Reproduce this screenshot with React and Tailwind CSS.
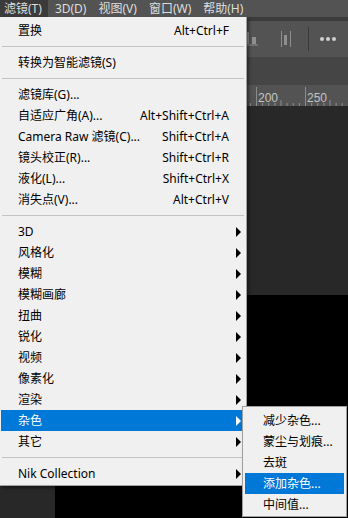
import React from 'react'

const FONT = "font-['Noto_Sans','Noto_Sans_CJK_SC',sans-serif]"

const MENU = [
  { label: '置换', sc: 'Alt+Ctrl+F' },
  'sep',
  { label: '转换为智能滤镜(S)' },
  'sep',
  { label: '滤镜库(G)...' },
  { label: '自适应广角(A)...', sc: 'Alt+Shift+Ctrl+A' },
  { label: 'Camera Raw 滤镜(C)...', sc: 'Shift+Ctrl+A' },
  { label: '镜头校正(R)...', sc: 'Shift+Ctrl+R' },
  { label: '液化(L)...', sc: 'Shift+Ctrl+X' },
  { label: '消失点(V)...', sc: 'Alt+Ctrl+V' },
  'sep',
  { label: '3D', sub: true },
  { label: '风格化', sub: true },
  { label: '模糊', sub: true },
  { label: '模糊画廊', sub: true },
  { label: '扭曲', sub: true },
  { label: '锐化', sub: true },
  { label: '视频', sub: true },
  { label: '像素化', sub: true },
  { label: '渲染', sub: true },
  { label: '杂色', sub: true, active: true },
  { label: '其它', sub: true },
  'sep',
  { label: 'Nik Collection', sub: true },
]

const SUBMENU = ['减少杂色...', '蒙尘与划痕...', '去斑', '添加杂色...', '中间值...']

const TOP = ['滤镜(T)', '3D(D)', '视图(V)', '窗口(W)', '帮助(H)']

function Arrow({ white }) {
  return (
    <div className={`w-0 h-0 border-y-[5px] border-y-transparent border-l-[5px] ${white ? 'border-l-white' : 'border-l-black'}`} />
  )
}

function MenuRow({ item }) {
  const on = item.active
  return (
    <div className={`mx-[1px] h-[21px] flex items-center pl-[17px] text-[12px] leading-[21px] ${on ? 'bg-[#0078d7] text-white' : 'text-black'}`}>
      <span className="flex-1 whitespace-nowrap">{item.label}</span>
      {item.sc && <span className="whitespace-nowrap">{item.sc}</span>}
      <div className="w-[16px] pl-[7px] flex items-center">{item.sub && <Arrow white={on} />}</div>
    </div>
  )
}

function Ruler() {
  const ticks = []
  for (let i = -40; i < 16; i++) {
    const x = 256 + i * 6.125
    if (i % 8 === 0) continue
    ticks.push(
      <line key={i} x1={x + 0.5} x2={x + 0.5} y1={i % 4 === 0 ? 15 : 18} y2={21} stroke="#8c8c8c" strokeWidth="1" />
    )
  }
  return (
    <svg width="348" height="21" className="block">
      {ticks}
      <line x1="256.5" x2="256.5" y1="2" y2="21" stroke="#8c8c8c" />
      <line x1="305.5" x2="305.5" y1="2" y2="21" stroke="#8c8c8c" />
      <text x="258" y="17" fontSize="12" fill="#c4c4c4" fontFamily="Liberation Sans, sans-serif">200</text>
      <text x="307" y="17" fontSize="12" fill="#c4c4c4" fontFamily="Liberation Sans, sans-serif">250</text>
    </svg>
  )
}

export default function App() {
  return (
    <div className={`relative w-[348px] h-[518px] overflow-hidden flex flex-col bg-[#282828] ${FONT}`}>
      {/* app menu bar */}
      <div className="h-[17px] bg-[#535353] flex items-center gap-[2px] text-[12px] leading-[17px] text-[#dedede]">
        {TOP.map((t, i) => (
          <span key={t} className={`h-[17px] px-[5px] whitespace-nowrap ${i === 0 ? 'bg-[#3b3b3b] pl-[4px] pr-[6px]' : ''}`}>{t}</span>
        ))}
      </div>
      <div className="h-[4px] bg-[#3c3c3c]" />

      {/* options bar */}
      <div className="h-[36px] bg-[#535353] flex items-center justify-end pr-[12px]">
        <svg width="14" height="14" viewBox="0 0 14 14" className="mr-[22px]">
          <rect x="1" y="0" width="3" height="12" fill="#8f8f8f" />
          <rect x="7" y="5" width="4" height="7" fill="#8f8f8f" />
          <rect x="0" y="12.5" width="13" height="1" fill="#8f8f8f" />
        </svg>
        <svg width="11" height="16" viewBox="0 0 11 16" className="mr-[16px]">
          <rect x="0" y="0" width="1" height="16" fill="#8f8f8f" />
          <rect x="3" y="4" width="3" height="10" fill="#8f8f8f" />
          <rect x="9" y="0" width="1" height="16" fill="#8f8f8f" />
        </svg>
        <div className="w-[1px] h-[24px] bg-[#3a3a3a] mr-[11px]" />
        <div className="flex gap-[2px]">
          <div className="w-[4px] h-[4px] rounded-full bg-[#d0d0d0]" />
          <div className="w-[4px] h-[4px] rounded-full bg-[#d0d0d0]" />
          <div className="w-[4px] h-[4px] rounded-full bg-[#d0d0d0]" />
        </div>
      </div>

      {/* tab strip + ruler */}
      <div className="h-[28px] bg-[#454545]" />
      <div className="h-[21px] bg-[#535353]">
        <Ruler />
      </div>

      {/* workspace */}
      <div className="flex-1 flex flex-col pl-[55px] pt-[189px]">
        <div className="flex-1 bg-black" />
      </div>

      {/* filter menu */}
      <div className="absolute left-0 top-[17px] w-[247px] bg-[#f0f0f0] border-r border-b border-[#a0a0a0] pt-[3px] pb-[1px] shadow-[2px_2px_3px_rgba(0,0,0,0.45)]">
        {MENU.map((it, i) =>
          it === 'sep' ? (
            <div key={i} className="h-[11px] flex items-center px-[2px]">
              <div className="h-[1px] w-full bg-[#c4c4c4]" />
            </div>
          ) : (
            <MenuRow key={i} item={it} />
          )
        )}
      </div>

      {/* noise submenu */}
      <div className="absolute left-[242px] top-[406px] w-[105px] bg-[#f0f0f0] border border-[#a0a0a0] pt-[3px] pb-[1px] shadow-[2px_2px_3px_rgba(0,0,0,0.35)]">
        {SUBMENU.map((s, i) => (
          <div key={s} className={`mx-[2px] h-[21px] flex items-center pl-[18px] text-[12px] leading-[21px] whitespace-nowrap ${i === 3 ? 'bg-[#0078d7] text-white' : 'text-black'}`}>
            {s}
          </div>
        ))}
      </div>
    </div>
  )
}
